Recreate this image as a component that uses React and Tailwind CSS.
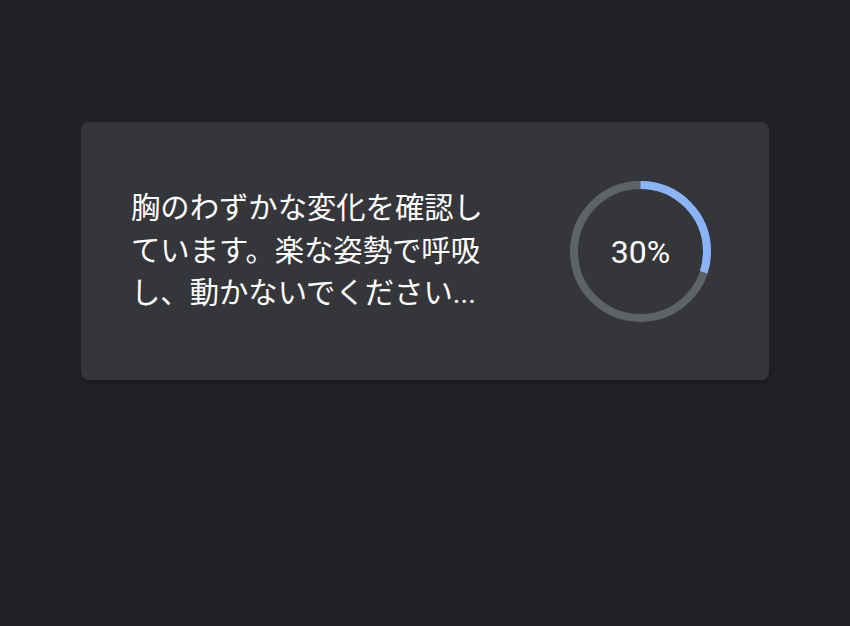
import React from 'react';

const progress = 30;

const ProgressRing = ({ value }) => {
  const size = 141;
  const stroke = 8;
  const r = (size - stroke) / 2;
  const c = 2 * Math.PI * r;
  return (
    <div className="relative flex h-[141px] w-[141px] items-center justify-center">
      <svg width={size} height={size} viewBox={`0 0 ${size} ${size}`} className="absolute inset-0 -rotate-90">
        <circle cx={size / 2} cy={size / 2} r={r} fill="none" stroke="#5f6368" strokeWidth={stroke} />
        <circle
          cx={size / 2}
          cy={size / 2}
          r={r}
          fill="none"
          stroke="#8ab4f8"
          strokeWidth={stroke}
          strokeDasharray={`${(c * value) / 100} ${c}`}
        />
      </svg>
      <span className="relative pt-[2px] text-[32px] leading-none text-white font-['Roboto','Noto_Sans_CJK_JP',sans-serif]">
        {value}%
      </span>
    </div>
  );
};

const App = () => {
  return (
    <div className="min-h-[626px] bg-[#202124] px-[81px] pt-[122px]">
      <div className="flex h-[258px] items-center justify-between rounded-lg bg-[#35363a] pl-[50px] pr-[58px] shadow-md">
        <p className="w-[356px] text-[29.33px] leading-[42.67px] text-white font-['Roboto','Noto_Sans_CJK_JP',sans-serif]">
          胸のわずかな変化を確認しています。楽な姿勢で呼吸し、動かないでください...
        </p>
        <ProgressRing value={progress} />
      </div>
    </div>
  );
};

export default App;
